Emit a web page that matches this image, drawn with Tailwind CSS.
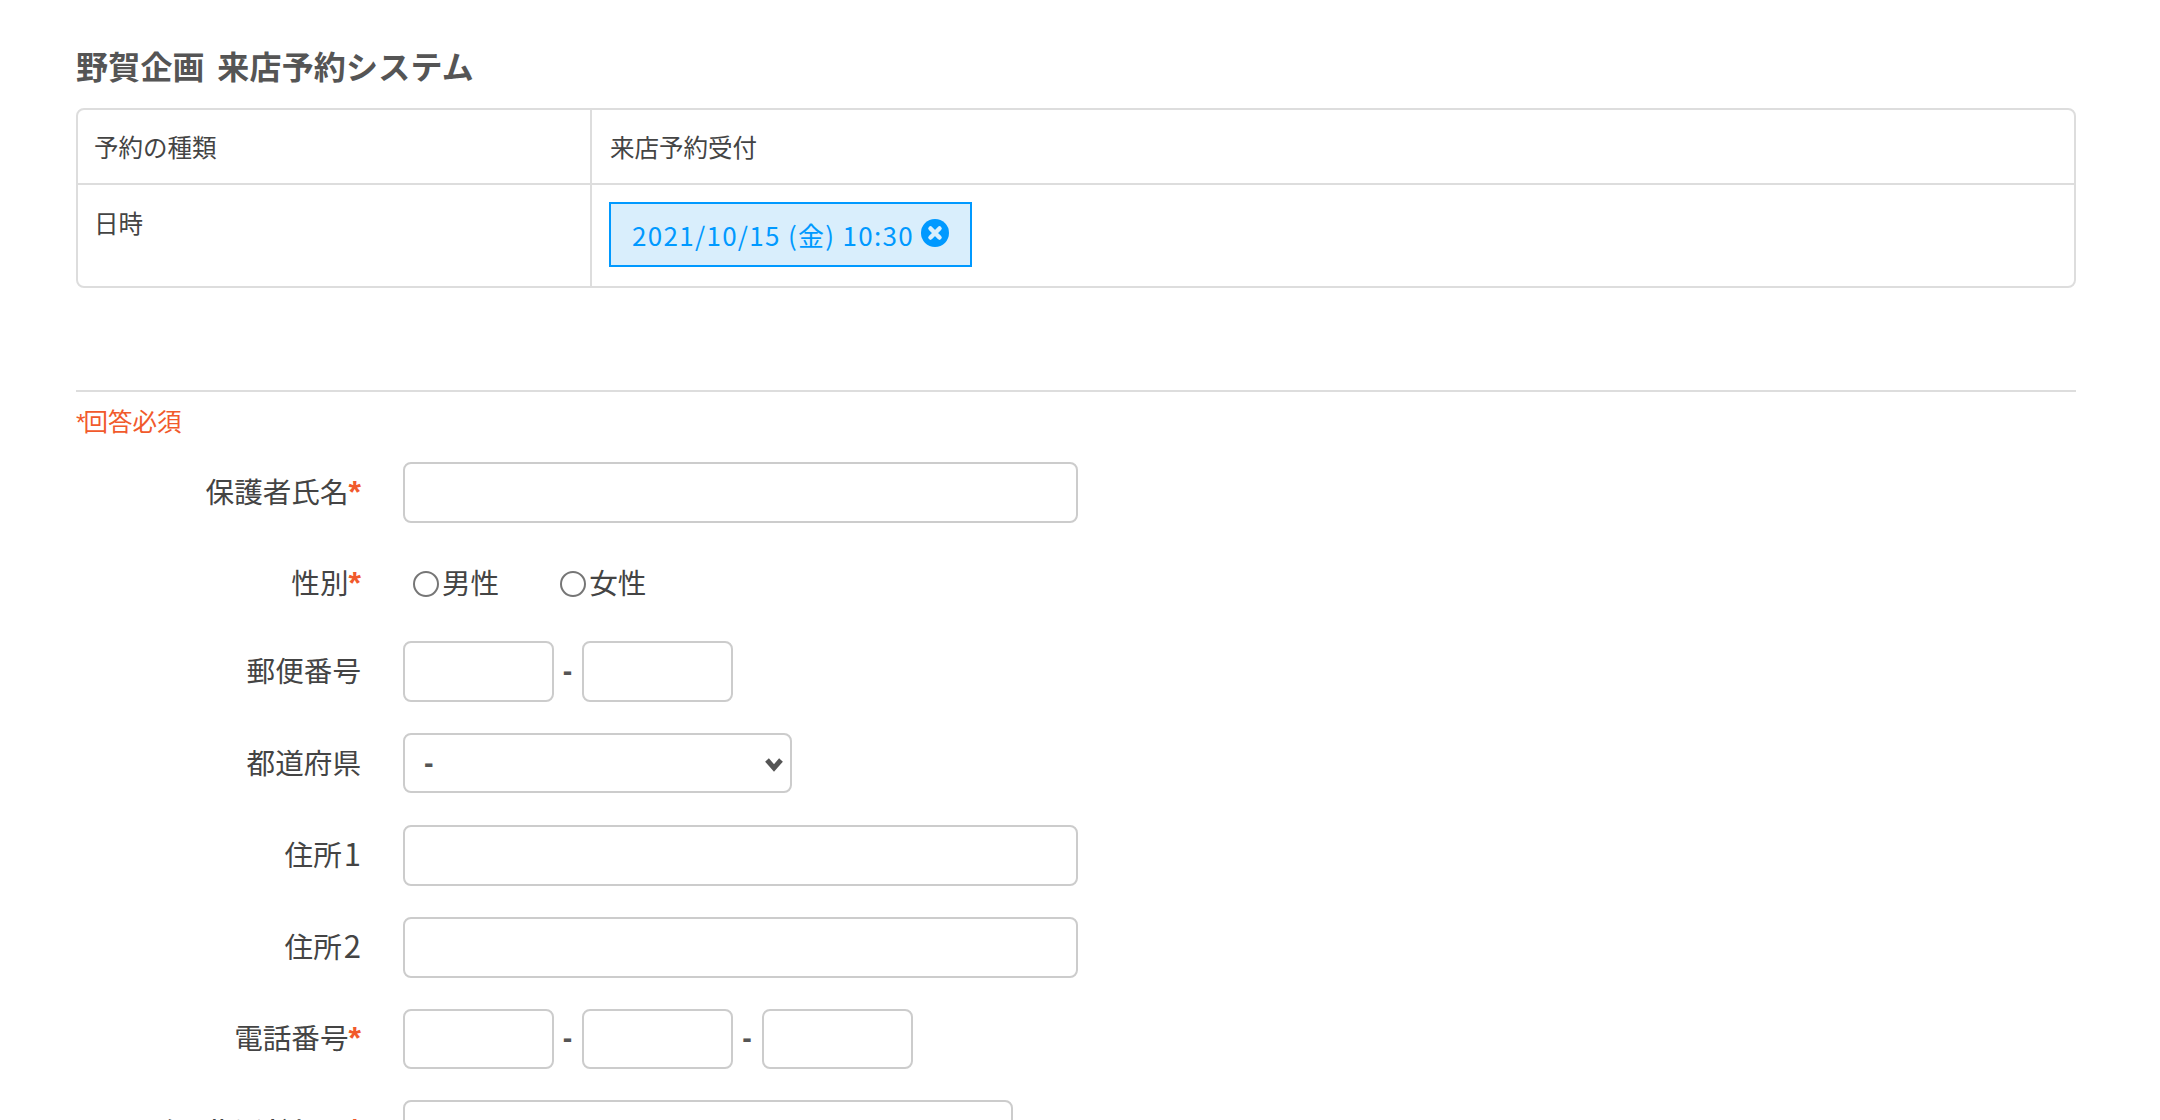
<!DOCTYPE html>
<html lang="ja">
  <head>
    <meta charset="UTF-8" />
    <title>来店予約システム</title>
    <script src="https://cdn.jsdelivr.net/npm/@tailwindcss/browser@4"></script>
  </head>
  <body class="h-[1120px] overflow-hidden bg-white text-[#444] font-['Noto_Sans_CJK_JP','Noto_Sans',sans-serif]">
    <div class="ml-[76px] mr-[84px] pt-[41px]">
      <!-- Title -->
      <h1 class="text-[32px] leading-[48px] font-bold text-[#555] tracking-[0.2px] [word-spacing:5px] mb-[19px]">野賀企画 来店予約システム</h1>

      <!-- Summary table -->
      <div class="grid grid-cols-[514px_1fr] border-2 border-[#ddd] rounded-lg text-[24.5px] leading-[36px] text-[#444]">
        <div class="h-[75px] px-[16px] py-[19px] border-r-2 border-b-2 border-[#ddd]">予約の種類</div>
        <div class="h-[75px] px-[18px] py-[19px] border-b-2 border-[#ddd]">来店予約受付</div>
        <div class="h-[101px] px-[16px] pt-[20px] border-r-2 border-[#ddd]">日時</div>
        <div class="h-[101px] px-[17px] pt-[17px]">
          <div class="inline-flex items-center h-[65px] w-[363px] pl-[21px] border-2 border-[#0099ff] bg-[#d9eefc] text-[26px] text-[#0099ff] tracking-[1.3px]">
            <span>2021/10/15 (金) 10:30</span>
            <svg class="ml-[7px] -mt-[3px] shrink-0" width="28" height="28" viewBox="0 0 28 28">
              <circle cx="14" cy="14" r="14" fill="#0099ff" />
              <path d="M9.5 9.5l9 9M18.5 9.5l-9 9" stroke="#d9eefc" stroke-width="4.5" stroke-linecap="round" />
            </svg>
          </div>
        </div>
      </div>

      <hr class="mt-[102px] border-t-2 border-[#ddd]" />
      <p class="mt-[11px] text-[24.5px] leading-[36px] text-[#f15a2c]"><span class="font-['Liberation_Sans'] -mr-[2px]">*</span>回答必須</p>

      <!-- Form -->
      <form class="mt-[21px] text-[28.6px] text-[#444]">
        <div class="flex items-center mb-[31px]">
          <label class="w-[285px] text-right -mt-[1px]">保護者氏名<span class="font-['Liberation_Sans'] text-[32px] leading-none font-bold text-[#f15a2c]">*</span></label>
          <input type="text" class="ml-[42px] w-[675px] h-[60.67px] border-2 border-[#ccc] rounded-lg" />
        </div>

        <div class="flex items-center h-[58px] mt-[1px] mb-[29.33px]">
          <label class="w-[285px] text-right">性別<span class="font-['Liberation_Sans'] text-[32px] leading-none font-bold text-[#f15a2c]">*</span></label>
          <div class="flex items-center ml-[52px]">
            <input type="radio" name="sex" class="appearance-none mt-[3px] w-[26px] h-[26px] rounded-full border-2 border-[#767676]" />
            <span class="ml-[3px]">男性</span>
            <input type="radio" name="sex" class="appearance-none mt-[3px] ml-[61px] w-[26px] h-[26px] rounded-full border-2 border-[#767676]" />
            <span class="ml-[3px]">女性</span>
          </div>
        </div>

        <div class="flex items-center mb-[31px]">
          <label class="w-[285px] text-right -mt-[2px]">郵便番号</label>
          <input type="text" class="ml-[42px] w-[151px] h-[60.67px] border-2 border-[#ccc] rounded-lg" />
          <span class="w-[28px] pr-[1px] text-center text-[#555] font-bold font-['Liberation_Sans']">-</span>
          <input type="text" class="w-[151px] h-[60.67px] border-2 border-[#ccc] rounded-lg" />
        </div>

        <div class="flex items-center mb-[32px]">
          <label class="w-[285px] text-right -mt-[2px]">都道府県</label>
          <div class="relative ml-[42px] w-[389px] h-[60.67px]">
            <select class="appearance-none w-full h-full pl-[19px] border-2 border-[#ccc] rounded-lg text-[#555] font-bold font-['Liberation_Sans']">
              <option>-</option>
            </select>
            <svg class="absolute right-[8px] top-[24px]" width="20" height="15" viewBox="0 0 20 15">
              <path d="M3 3l7 8 7-8" fill="none" stroke="#555" stroke-width="5" />
            </svg>
          </div>
        </div>

        <div class="flex items-center mb-[31px]">
          <label class="w-[285px] text-right -mt-[2px]">住所<span class="pl-[2px] text-[31px] leading-none">1</span></label>
          <input type="text" class="ml-[42px] w-[675px] h-[60.67px] border-2 border-[#ccc] rounded-lg" />
        </div>

        <div class="flex items-center mb-[31px]">
          <label class="w-[285px] text-right -mt-[2px]">住所<span class="pl-[2px] text-[31px] leading-none">2</span></label>
          <input type="text" class="ml-[42px] w-[675px] h-[60.67px] border-2 border-[#ccc] rounded-lg" />
        </div>

        <div class="flex items-center mb-[31px]">
          <label class="w-[285px] text-right -mt-[2px]">電話番号<span class="font-['Liberation_Sans'] text-[32px] leading-none font-bold text-[#f15a2c]">*</span></label>
          <input type="text" class="ml-[42px] w-[151px] h-[60.67px] border-2 border-[#ccc] rounded-lg" />
          <span class="w-[28px] pr-[1px] text-center text-[#555] font-bold font-['Liberation_Sans']">-</span>
          <input type="text" class="w-[151px] h-[60.67px] border-2 border-[#ccc] rounded-lg" />
          <span class="w-[29px] pr-[1px] text-center text-[#555] font-bold font-['Liberation_Sans']">-</span>
          <input type="text" class="w-[151px] h-[60.67px] border-2 border-[#ccc] rounded-lg" />
        </div>

        <div class="flex items-center mb-[31px]">
          <label class="w-[285px] text-right -mt-[2px]">メールアドレス<span class="font-['Liberation_Sans'] text-[32px] leading-none font-bold text-[#f15a2c]">*</span></label>
          <input type="text" class="ml-[42px] w-[610px] h-[60.67px] border-2 border-[#ccc] rounded-lg" />
        </div>
      </form>
    </div>
  </body>
</html>
